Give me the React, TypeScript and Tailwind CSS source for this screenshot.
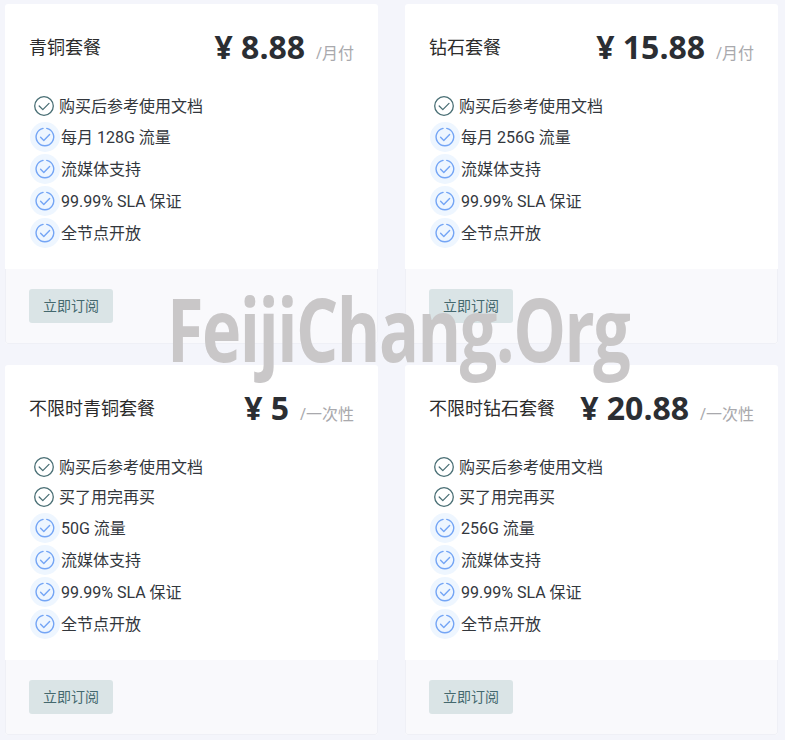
type Feature = { text: string; included?: boolean }

type Plan = {
  name: string
  price: string
  unit: string
  features: Feature[]
}

const plans: Plan[] = [
  {
    name: '青铜套餐',
    price: '8.88',
    unit: '月付',
    features: [
      { text: '购买后参考使用文档', included: true },
      { text: '每月 128G 流量' },
      { text: '流媒体支持' },
      { text: '99.99% SLA 保证' },
      { text: '全节点开放' },
    ],
  },
  {
    name: '钻石套餐',
    price: '15.88',
    unit: '月付',
    features: [
      { text: '购买后参考使用文档', included: true },
      { text: '每月 256G 流量' },
      { text: '流媒体支持' },
      { text: '99.99% SLA 保证' },
      { text: '全节点开放' },
    ],
  },
  {
    name: '不限时青铜套餐',
    price: '5',
    unit: '一次性',
    features: [
      { text: '购买后参考使用文档', included: true },
      { text: '买了用完再买', included: true },
      { text: '50G 流量' },
      { text: '流媒体支持' },
      { text: '99.99% SLA 保证' },
      { text: '全节点开放' },
    ],
  },
  {
    name: '不限时钻石套餐',
    price: '20.88',
    unit: '一次性',
    features: [
      { text: '购买后参考使用文档', included: true },
      { text: '买了用完再买', included: true },
      { text: '256G 流量' },
      { text: '流媒体支持' },
      { text: '99.99% SLA 保证' },
      { text: '全节点开放' },
    ],
  },
]

function DarkCheck() {
  return (
    <svg viewBox="0 0 20 20" className="w-5 h-5 shrink-0" fill="none" stroke="#4a6f75" strokeWidth="1.3">
      <circle cx="10" cy="10" r="9.3" />
      <path d="M5.2 10l3.6 3.6 6.2-6.2" strokeLinecap="round" strokeLinejoin="round" />
    </svg>
  )
}

function BlueCheck() {
  return (
    <span className="w-[30px] h-[30px] shrink-0 rounded-full bg-[#eef6ff] flex items-center justify-center">
      <svg viewBox="0 0 20 20" className="w-5 h-5" fill="none" stroke="#74a5f5" strokeWidth="1.4">
        <path d="M11.8 1.4A8.8 8.8 0 1 1 8 1.4" strokeLinecap="round" />
        <path d="M5.6 10.2l3.2 3.2 5.8-5.8" strokeLinecap="round" strokeLinejoin="round" />
      </svg>
    </span>
  )
}

function PlanCard({ plan }: { plan: Plan }) {
  return (
    <div className="bg-white rounded-[3px] overflow-hidden">
      <div className="flex items-start justify-between px-[24px] pt-[22px] h-[87px]">
        <h3 className="mt-px text-[18px] leading-[40px] text-[#2b2b2b] font-normal">{plan.name}</h3>
        <div className="flex items-baseline">
          <span className="text-[32px] leading-[42px] font-bold text-[#2b2e33]">¥ {plan.price}</span>
          <span className="ml-[11px] text-[16px] text-[#a9a9ad]">/{plan.unit}</span>
        </div>
      </div>
      <ul className="pl-[25px] pb-[20px] text-[16px] text-[#33373d] font-['Roboto','Noto_Sans_CJK_SC',sans-serif]">
        {plan.features.map((f) =>
          f.included ? (
            <li key={f.text} className="h-[30px] flex items-center gap-[5px] pl-[4px]">
              <DarkCheck />
              <span className="pt-[2px]">{f.text}</span>
            </li>
          ) : (
            <li key={f.text} className="h-[32px] flex items-center gap-px">
              <BlueCheck />
              <span className="pt-[2px]">{f.text}</span>
            </li>
          ),
        )}
      </ul>
      <div className="bg-[#f9f9fc] h-[75px] pl-[24px] pt-[20px] border border-t-0 border-[#eff0f6] rounded-b-[3px]">
        <button className="block -ml-px w-[84px] h-[34px] pb-[2px] rounded-[3px] bg-[#dae4e6] text-[14px] text-[#44686e]">立即订阅</button>
      </div>
    </div>
  )
}

export default function App() {
  return (
    <div
      className="relative min-h-[740px] bg-[#f4f5fb] overflow-hidden pt-[4px] pl-[5px]"
      style={{ fontFamily: '"Open Sans", "Noto Sans CJK SC", sans-serif' }}
    >
      <div className="grid grid-cols-[373px_373px] gap-x-[27px] gap-y-[21px]">
        {plans.map((p) => (
          <PlanCard key={p.name} plan={p} />
        ))}
      </div>
      <div className="absolute left-[167px] top-[273px] origin-left scale-x-[0.755] text-[88px] leading-[110px] font-bold text-[#c9c7c8] whitespace-nowrap tracking-[-2px]">
        FeijiChang.Org
      </div>
    </div>
  )
}
